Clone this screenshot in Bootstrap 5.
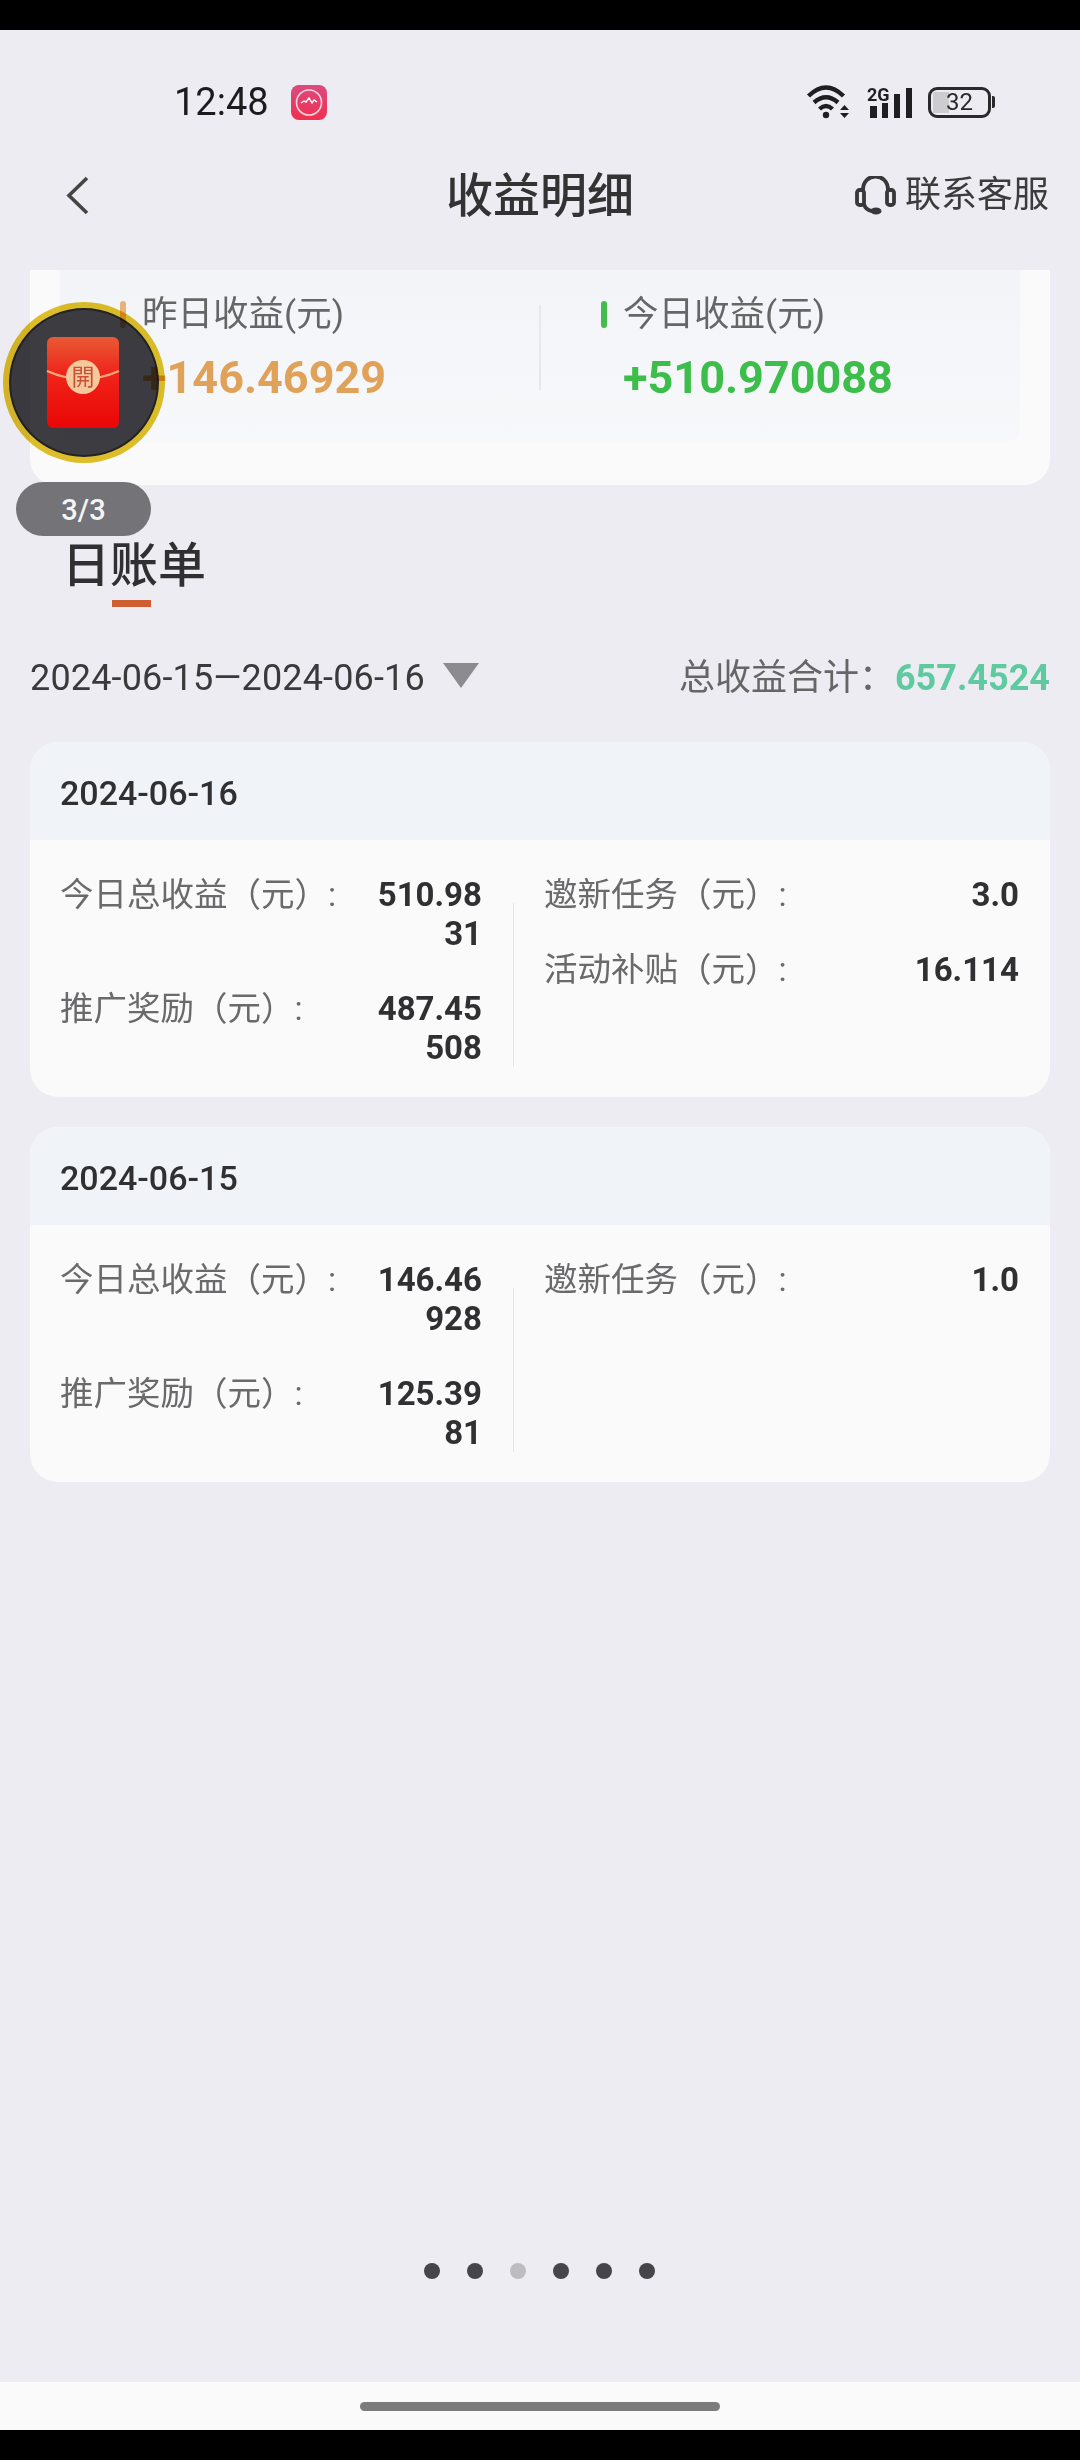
<!DOCTYPE html>
<html lang="zh-CN">
<head>
  <meta charset="UTF-8" />
  <meta name="viewport" content="width=device-width, initial-scale=1.0" />
  <title>收益明细</title>
  <link href="https://cdn.jsdelivr.net/npm/bootstrap@5.3.3/dist/css/bootstrap.min.css" rel="stylesheet">
  <style>
    body { width: 1080px; height: 2460px; overflow: hidden; background: #edecf2; font-family: Roboto, "Noto Sans CJK SC", sans-serif; color: #333; }
    .black-strip { height: 30px; background: #000; flex: none; }
    .status-row { height: 114px; padding: 30px 85px 0 174px; flex: none; }
    .clock { font-size: 38px; line-height: 1; color: #1c1c1e; }
    .app-badge { margin-left: 22px; }
    .batt { width: 63px; height: 31px; margin-left: 15px; border: 3px solid #2a2a2c; border-radius: 9px; font-size: 24px; line-height: 25px; color: #2a2a2c; text-align: center; background: linear-gradient(#cdcdd0, #cdcdd0) 2px 2px / 16px 21px no-repeat; }
    .batt-nub { width: 3px; height: 12px; margin-left: 1px; background: #2a2a2c; border-radius: 0 2px 2px 0; }
    .nav-head { height: 126px; padding-bottom: 24px; flex: none; }
    .nav-side { width: 446px; flex: none; }
    .nav-side.left-side { padding-left: 65px; }
    .nav-side.right-side { padding-right: 31px; }
    .nav-title { width: 188px; font-size: 47px; font-weight: 500; color: #333; line-height: 1; white-space: nowrap; }
    .help-text { font-size: 36px; color: #3c3c3e; line-height: 1; margin-left: 9px; }
    .sum-card { margin: 0 30px; height: 215px; padding: 0 30px 44px; background: #fafafb; border-radius: 0 0 26px 26px; flex: none; }
    .sum-inner { height: 171px; background: linear-gradient(#f3f4f8, #f7f8fa); border-radius: 0 0 12px 12px; }
    .sum-col { flex: 1 1 0; padding: 22px 0 0 60px; }
    .sum-label { font-size: 35.5px; line-height: 44px; color: #666; }
    .tick { width: 6px; height: 27px; border-radius: 3px; margin-right: 16px; }
    .tick-orange { background: #e8b37a; }
    .tick-green { background: #44bb4e; }
    .sum-value { font-size: 45px; font-weight: 700; line-height: 56px; margin: 14px 0 0 22px; }
    .val-orange { color: #e0a158; }
    .val-green { color: #3dbd49; }
    .sum-split { width: 2px; height: 85px; margin-top: 35px; background: #e8e8ec; }
    .float-disc { left: 3px; top: 302px; width: 162px; height: 161px; background: #3d3d42; border: 6px solid #e2c228; box-shadow: inset 0 0 0 2px #232325; mix-blend-mode: multiply; }
    .float-red { left: 3px; top: 302px; width: 162px; height: 161px; }
    .float-pill { left: 16px; top: 482px; width: 135px; height: 54px; border-radius: 27px; background: #737378; color: #f5f5f5; font-size: 29px; font-weight: 500; line-height: 56px; text-align: center; }
    .bill-head { margin: 53px 0 0 62px; flex: none; }
    .bill-title { font-size: 48px; font-weight: 500; line-height: 56px; color: #303033; }
    .bill-line { width: 39px; height: 7px; margin: 6px 0 0 50px; background: #cf5f33; }
    .range-row { height: 50px; margin: 46px 30px 0; flex: none; }
    .range-date { font-size: 36px; letter-spacing: .15px; color: #3a3a3c; line-height: 1; }
    .range-arrow { width: 0; height: 0; margin-left: 18px; margin-bottom: 6px; border-left: 18px solid transparent; border-right: 18px solid transparent; border-top: 25px solid #8c8c90; }
    .total-label { font-size: 36px; color: #666; line-height: 1; }
    .total-value { font-size: 36px; font-weight: 700; color: #5fc9a0; line-height: 1; }
    .day-card { margin: 39px 30px 0; height: 355px; border: 0; border-radius: 28px; background: #fafafa; overflow: hidden; flex: none; }
    .day-card + .day-card { margin-top: 30px; }
    .day-card .card-header { height: 98px; padding: 2px 30px 0; border: 0; border-radius: 0; background: #f0f3f7; font-size: 34px; font-weight: 500; line-height: 98px; color: #303033; }
    .day-card .card-body { padding: 35px 31px 30px 30px; }
    .day-left { width: 422px; }
    .day-split { width: 1px; margin: 28px 30px 0 31px; background: #e6e6e6; }
    .day-right { flex: 1 1 0; }
    .day-item { margin-bottom: 36px; }
    .day-item:last-child { margin-bottom: 0; }
    .item-label { font-size: 33.5px; line-height: 39px; color: #6a6a6c; }
    .item-value { width: 110px; font-size: 33px; font-weight: 700; line-height: 39px; color: #303033; word-break: break-all; }
    .pager { gap: 27px; margin-bottom: 103px; padding-right: 1px; }
    .pager-dot { width: 16px; height: 16px; background: #46464a; }
    .pager-dot.dim { background: #bdbdc0; }
    .gesture-bar { height: 48px; background: #fafafa; flex: none; }
    .gesture-pill { width: 360px; height: 9px; border-radius: 5px; background: #7c7c7c; }
  </style>
</head>
<body class="position-relative d-flex flex-column">
  <div class="black-strip"></div>

  <div class="status-row d-flex align-items-center">
    <span class="clock">12:48</span>
    <svg class="app-badge" width="36" height="35" viewBox="0 0 36 35">
      <defs><linearGradient id="appg" x1="0" y1="0" x2="0" y2="1"><stop offset="0" stop-color="#dc4a80"/><stop offset="1" stop-color="#f03050"/></linearGradient></defs>
      <rect width="36" height="35" rx="8" fill="url(#appg)"/>
      <circle cx="18" cy="17.5" r="12.5" fill="none" stroke="#f8d5dc" stroke-width="1.6"/>
      <path d="M10 18 L13 16 L15 17 L18 13 L21 18 L23 15 L26 17" fill="none" stroke="#fff" stroke-width="1.4"/>
    </svg>
    <svg class="ms-auto" width="44" height="34" viewBox="0 0 44 34">
      <g fill="none" stroke="#1f1f21" stroke-width="4.4" stroke-linecap="butt">
        <path d="M2.5 11 Q20 -6 37.5 11"/>
        <path d="M8 17.5 Q20 7 32 17.5"/>
        <path d="M13.5 24 Q20 18 26.5 24"/>
      </g>
      <circle cx="20" cy="30" r="3.2" fill="#1f1f21"/>
      <path d="M34 25 L38.5 20 L43 25 Z M34 28 L43 28 L38.5 33 Z" fill="#1f1f21"/>
    </svg>
    <svg class="ms-3" width="47" height="41" viewBox="0 -4 47 41">
      <text x="1" y="15" font-family="Roboto, sans-serif" font-size="18" font-weight="700" fill="#1f1f21">2G</text>
      <rect x="4" y="20" width="7" height="12" fill="#1f1f21"/>
      <rect x="16" y="17" width="6" height="15" fill="#1f1f21"/>
      <rect x="28" y="8" width="6" height="24" fill="#1f1f21"/>
      <rect x="40" y="2" width="6" height="30" fill="#1f1f21"/>
    </svg>
    <div class="batt">32</div>
    <div class="batt-nub"></div>
  </div>

  <div class="nav-head d-flex align-items-center">
    <div class="nav-side left-side">
      <svg class="d-block" width="24" height="39" viewBox="0 0 24 39"><path d="M22 2 L4 19.5 L22 37" fill="none" stroke="#444" stroke-width="3.6"/></svg>
    </div>
    <div class="nav-title">收益明细</div>
    <div class="nav-side right-side d-flex align-items-center justify-content-end">
      <svg width="41" height="39" viewBox="0 0 41 39">
        <g fill="none" stroke="#38383a" stroke-width="3.8">
          <rect x="2" y="14" width="7" height="15" rx="2.5"/>
          <rect x="32" y="14" width="7" height="15" rx="2.5"/>
          <path d="M8 14 C8 -4 33 -4 33 14"/>
          <path d="M9 28 C10 32 13 34.5 17 35"/>
        </g>
        <ellipse cx="21" cy="35" rx="5.5" ry="3.6" fill="#38383a"/>
      </svg>
      <span class="help-text">联系客服</span>
    </div>
  </div>

  <div class="sum-card">
    <div class="sum-inner d-flex">
      <div class="sum-col">
        <div class="sum-label d-flex align-items-center"><span class="tick tick-orange"></span>昨日收益(元)</div>
        <div class="sum-value val-orange">+146.46929</div>
      </div>
      <div class="sum-split"></div>
      <div class="sum-col">
        <div class="sum-label d-flex align-items-center"><span class="tick tick-green"></span>今日收益(元)</div>
        <div class="sum-value val-green">+510.970088</div>
      </div>
    </div>
  </div>

  <div class="bill-head">
    <div class="bill-title">日账单</div>
    <div class="bill-line"></div>
  </div>

  <div class="range-row d-flex align-items-center justify-content-between">
    <div class="d-flex align-items-center">
      <span class="range-date">2024-06-15—2024-06-16</span>
      <span class="range-arrow"></span>
    </div>
    <div class="d-flex align-items-center">
      <span class="total-label">总收益合计：</span>
      <span class="total-value">657.4524</span>
    </div>
  </div>

  <div class="card day-card">
    <div class="card-header">2024-06-16</div>
    <div class="card-body d-flex">
      <div class="day-left">
        <div class="day-item d-flex justify-content-between">
          <span class="item-label">今日总收益（元）:</span>
          <span class="item-value text-end">510.9831</span>
        </div>
        <div class="day-item d-flex justify-content-between">
          <span class="item-label">推广奖励（元）:</span>
          <span class="item-value text-end">487.45508</span>
        </div>
      </div>
      <div class="day-split"></div>
      <div class="day-right">
        <div class="day-item d-flex justify-content-between">
          <span class="item-label">邀新任务（元）:</span>
          <span class="item-value text-end">3.0</span>
        </div>
        <div class="day-item d-flex justify-content-between">
          <span class="item-label">活动补贴（元）:</span>
          <span class="item-value text-end">16.114</span>
        </div>
      </div>
    </div>
  </div>

  <div class="card day-card">
    <div class="card-header">2024-06-15</div>
    <div class="card-body d-flex">
      <div class="day-left">
        <div class="day-item d-flex justify-content-between">
          <span class="item-label">今日总收益（元）:</span>
          <span class="item-value text-end">146.46928</span>
        </div>
        <div class="day-item d-flex justify-content-between">
          <span class="item-label">推广奖励（元）:</span>
          <span class="item-value text-end">125.3981</span>
        </div>
      </div>
      <div class="day-split"></div>
      <div class="day-right">
        <div class="day-item d-flex justify-content-between">
          <span class="item-label">邀新任务（元）:</span>
          <span class="item-value text-end">1.0</span>
        </div>
      </div>
    </div>
  </div>

  <div class="pager d-flex justify-content-center mt-auto">
    <span class="pager-dot rounded-circle"></span>
    <span class="pager-dot rounded-circle"></span>
    <span class="pager-dot dim rounded-circle"></span>
    <span class="pager-dot rounded-circle"></span>
    <span class="pager-dot rounded-circle"></span>
    <span class="pager-dot rounded-circle"></span>
  </div>

  <div class="gesture-bar d-flex align-items-center justify-content-center">
    <div class="gesture-pill"></div>
  </div>
  <div class="black-strip"></div>

  <div class="float-disc position-absolute rounded-circle"></div>
  <svg class="float-red position-absolute" viewBox="0 0 162 161">
    <defs>
      <linearGradient id="packet" x1="0" y1="0" x2="0" y2="1">
        <stop offset="0" stop-color="#e85a35"/>
        <stop offset="0.4" stop-color="#f0241a"/>
        <stop offset="1" stop-color="#ea0606"/>
      </linearGradient>
    </defs>
    <rect x="44" y="35" width="72" height="91" rx="6" fill="url(#packet)"/>
    <path d="M44 69 Q80 85 116 69" fill="none" stroke="#f3a67c" stroke-width="2.4"/>
    <circle cx="80" cy="75" r="17" fill="#f6c99c"/>
    <text x="80" y="83" text-anchor="middle" font-family="'Noto Sans CJK TC', sans-serif" font-size="23" fill="#c8503a">開</text>
  </svg>
  <div class="float-pill position-absolute">3/3</div>
</body>
</html>
